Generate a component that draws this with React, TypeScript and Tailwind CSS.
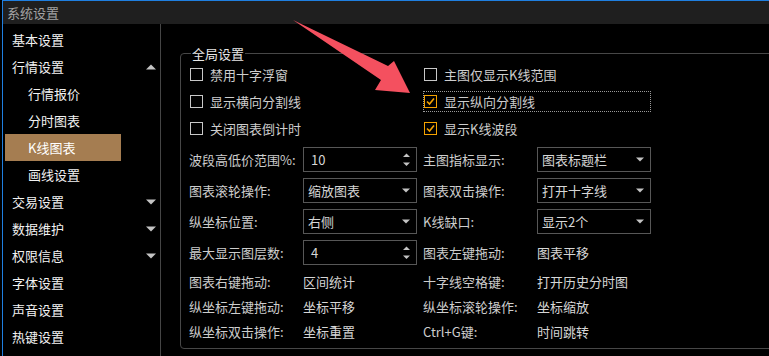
import React from "react";

const font = { fontFamily: '"Noto Sans CJK SC", "Noto Sans", sans-serif' };

const Tri = ({ up }: { up?: boolean }) => (
  <svg width="10" height="6" viewBox="0 0 10 6" className="shrink-0">
    {up ? <polygon points="0,5.5 5,0.5 10,5.5" fill="#c4c4c4" /> : <polygon points="0,0.5 10,0.5 5,5.5" fill="#c4c4c4" />}
  </svg>
);

const SideItem = ({ label, sub, arrow, active }: { label: string; sub?: boolean; arrow?: "up" | "down"; active?: boolean }) => {
  if (active) {
    return (
      <div className="h-[27px] flex items-center">
        <div className="ml-[2px] w-[116px] h-[27px] bg-[#a57d51] flex items-center pl-[23px] text-white">{label}</div>
      </div>
    );
  }
  return (
    <div className={`h-[27px] flex items-center justify-between pr-[4px] text-[#f2f2f2] ${sub ? "pl-[25px]" : "pl-[9px]"}`}>
      <span>{label}</span>
      {arrow && <Tri up={arrow === "up"} />}
    </div>
  );
};

const Check = ({ label, checked, focus }: { label: string; checked?: boolean; focus?: boolean }) => (
  <div className="h-[27px] flex items-center">
    <div className={`flex items-center gap-[7px] h-[21px] ${focus ? "-ml-[1px] w-[228px] border border-dotted border-[#9a9a9a]" : ""}`}>
      <div className={`w-[13px] h-[13px] border shrink-0 flex items-center justify-center ${checked ? "border-[#f5a200]" : "border-[#c8c8c8]"}`}>
        {checked && (
          <svg width="11" height="11" viewBox="0 0 11 11">
            <polyline points="2,5.5 4.5,8 9,2.5" fill="none" stroke="#f5a200" strokeWidth="1.6" />
          </svg>
        )}
      </div>
      <span className="text-[#cdcdcd]">{label}</span>
    </div>
  </div>
);

const Spin = ({ value }: { value: string }) => (
  <div className="w-[114px] h-[25px] border border-[#575757] flex items-center justify-between pl-[7px] pr-[6px] text-[#d6d6d6]">
    <span>{value}</span>
    <svg width="7" height="14" viewBox="0 0 7 14">
      <polygon points="0,4 3.5,0.5 7,4" fill="#c4c4c4" />
      <polygon points="0,9.5 7,9.5 3.5,13" fill="#c4c4c4" />
    </svg>
  </div>
);

const Select = ({ value }: { value: string }) => (
  <div className="w-[114px] h-[25px] border border-[#575757] flex items-center justify-between pl-[4px] pr-[6px] text-[#d6d6d6]">
    <span>{value}</span>
    <svg width="8" height="5" viewBox="0 0 8 5">
      <polygon points="0,0.5 8,0.5 4,4.5" fill="#c4c4c4" />
    </svg>
  </div>
);

const Label = ({ children }: { children: React.ReactNode }) => (
  <div className="w-[114px] shrink-0 text-[#cdcdcd] whitespace-nowrap">{children}</div>
);

const Value = ({ children }: { children: React.ReactNode }) => (
  <div className="w-[114px] shrink-0 text-[#d6d6d6] whitespace-nowrap">{children}</div>
);

const FormRow = ({ l1, v1, l2, v2 }: { l1: string; v1: React.ReactNode; l2: string; v2: React.ReactNode }) => (
  <div className="flex items-center h-[25px]">
    <Label>{l1}</Label>
    {v1}
    <div className="w-[6px] shrink-0" />
    <Label>{l2}</Label>
    {v2}
  </div>
);

export default function App() {
  return (
    <div className="relative flex w-[769px] h-[356px] overflow-hidden bg-black text-[13px] leading-[17px]" style={font}>
      <div className="w-[2px] shrink-0 bg-black" />
      <div className="flex-1 flex flex-col border-l border-t border-[#1f7fe0]">
        <div className="h-[23px] bg-[#1f1f1f] flex items-center pl-[4px] text-[#a3a3a3]">系统设置</div>
        <div className="flex flex-1">
          <div className="w-[158px] shrink-0 border-r border-[#454545] pt-[2px]">
            <SideItem label="基本设置" />
            <SideItem label="行情设置" arrow="up" />
            <SideItem label="行情报价" sub />
            <SideItem label="分时图表" sub />
            <SideItem label="K线图表" active />
            <SideItem label="画线设置" sub />
            <SideItem label="交易设置" arrow="down" />
            <SideItem label="数据维护" arrow="down" />
            <SideItem label="权限信息" arrow="down" />
            <SideItem label="字体设置" />
            <SideItem label="声音设置" />
            <SideItem label="热键设置" />
          </div>
          <div className="flex-1 pl-[19px] pt-[29px]">
            <div className="relative w-[620px] h-[296px] border border-[#474747] rounded-[4px] pt-[7px]">
              <div className="absolute left-[10px] -top-[9px] px-[1px] bg-black text-[#e6e6e6]">全局设置</div>
              <div className="grid grid-cols-[234px_auto] pl-[9px]">
                <Check label="禁用十字浮窗" />
                <Check label="主图仅显示K线范围" />
                <Check label="显示横向分割线" />
                <Check label="显示纵向分割线" checked focus />
                <Check label="关闭图表倒计时" />
                <Check label="显示K线波段" checked />
              </div>
              <div className="mt-[5px] pl-[8px] flex flex-col gap-[6px]">
                <FormRow l1="波段高低价范围%:" v1={<Spin value="10" />} l2="主图指标显示:" v2={<Select value="图表标题栏" />} />
                <FormRow l1="图表滚轮操作:" v1={<Select value="缩放图表" />} l2="图表双击操作:" v2={<Select value="打开十字线" />} />
                <FormRow l1="纵坐标位置:" v1={<Select value="右侧" />} l2="K线缺口:" v2={<Select value="显示2个" />} />
                <FormRow l1="最大显示图层数:" v1={<Spin value="4" />} l2="图表左键拖动:" v2={<Value>图表平移</Value>} />
              </div>
              <div className="mt-[4px] pl-[8px] flex flex-col">
                <FormRow l1="图表右键拖动:" v1={<Value>区间统计</Value>} l2="十字线空格键:" v2={<Value>打开历史分时图</Value>} />
                <FormRow l1="纵坐标左键拖动:" v1={<Value>坐标平移</Value>} l2="纵坐标滚轮操作:" v2={<Value>坐标缩放</Value>} />
                <FormRow l1="纵坐标双击操作:" v1={<Value>坐标重置</Value>} l2="Ctrl+G键:" v2={<Value>时间跳转</Value>} />
              </div>
            </div>
          </div>
        </div>
      </div>
      <svg className="absolute left-0 top-0 pointer-events-none" width="769" height="356" viewBox="0 0 769 356">
        <polygon points="293,20 388,66 394,61 410,93 375,90 381,80" fill="#f4505f" />
      </svg>
    </div>
  );
}
